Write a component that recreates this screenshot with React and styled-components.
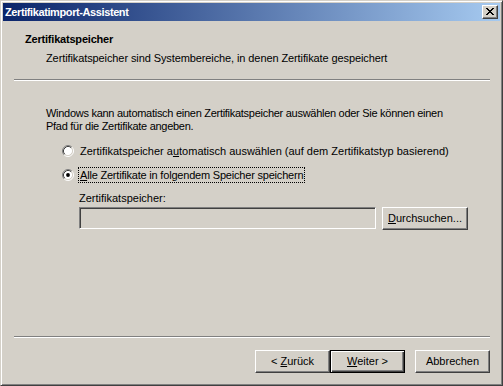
import React from "react";
import styled, { createGlobalStyle } from "styled-components";

const Global = createGlobalStyle`
  html, body { margin: 0; padding: 0; background: #d4d0c8; }
  body { font-family: "Liberation Sans", Arial, sans-serif; font-size: 11px; color: #000; }
  * { box-sizing: border-box; }
`;

const Window = styled.div`
  width: 503px;
  height: 386px;
  background: #d4d0c8;
  border: 1px solid;
  border-color: #d4d0c8 #404040 #404040 #d4d0c8;
  box-shadow: inset 1px 1px #ffffff, inset -1px -1px #808080;
  padding: 2px;
  display: flex;
  flex-direction: column;
`;

const TitleBar = styled.div`
  height: 18px;
  flex: none;
  display: flex;
  align-items: center;
  justify-content: space-between;
  padding: 0 2px 0 2px;
  background: linear-gradient(to right, #0a246a, #a6caf0);
`;

const TitleText = styled.span`
  color: #fff;
  font-weight: bold;
  font-size: 11px;
  line-height: 13px;
  letter-spacing: -0.4px;
  white-space: nowrap;
`;

const CloseButton = styled.div`
  width: 16px;
  height: 14px;
  background: #d4d0c8;
  border: 1px solid;
  border-color: #ffffff #404040 #404040 #ffffff;
  box-shadow: inset -1px -1px #808080;
  display: flex;
  align-items: center;
  justify-content: center;
  padding: 0 1px 1px 0;
`;

const Header = styled.div`
  height: 58px;
  flex: none;
  padding: 12px 0 0 22px;
  display: flex;
  flex-direction: column;
`;

const HeaderTitle = styled.div`
  font-weight: bold;
  line-height: 13px;
  letter-spacing: -0.2px;
`;

const HeaderSubtitle = styled.div`
  line-height: 13px;
  letter-spacing: -0.1px;
  margin: 6px 0 0 21px;
`;

const Separator = styled.div`
  height: 2px;
  flex: none;
  margin: 0 10px 0 11px;
  border-top: 1px solid #808080;
  border-bottom: 1px solid #ffffff;
`;

const Body = styled.div`
  flex: 1;
  padding: 26px 0 0 43px;
  display: flex;
  flex-direction: column;
`;

const Paragraph = styled.div`
  line-height: 13px;
  letter-spacing: -0.28px;
  white-space: nowrap;
`;

const RadioGroup = styled.div`
  margin: 10px 0 0 16px;
  display: flex;
  flex-direction: column;
  gap: 8px;
`;

const RadioRow = styled.div`
  height: 16px;
  display: flex;
  align-items: center;
  gap: 4px;
`;

const RadioLabel = styled.span`
  line-height: 12px;
  padding: 1px;
  letter-spacing: ${(p) => p.$ls || 0}px;
  border: 1px ${(p) => (p.$focus ? "dotted #000" : "solid transparent")};
  white-space: nowrap;
`;

const Mn = styled.u`
  text-decoration: underline;
  text-underline-offset: 1px;
`;

const StoreBlock = styled.div`
  margin: 9px 0 0 33px;
  display: flex;
  flex-direction: column;
  gap: 2px;
`;

const FieldLabel = styled.div`
  line-height: 13px;
`;

const FieldRow = styled.div`
  display: flex;
  align-items: flex-start;
  gap: 6px;
`;

const TextBox = styled.div`
  width: 297px;
  height: 22px;
  background: #d4d0c8;
  border: 1px solid;
  border-color: #808080 #ffffff #ffffff #808080;
  box-shadow: inset 1px 1px #404040, inset -1px -1px #d4d0c8;
`;

const Button = styled.button`
  width: ${(p) => p.$w || 75}px;
  height: 23px;
  padding: 0;
  margin: 0;
  font-family: "Liberation Sans", Arial, sans-serif;
  font-size: 11px;
  color: #000;
  background: #d4d0c8;
  border: 1px solid;
  border-color: ${(p) => (p.$default ? "#000" : "#ffffff #404040 #404040 #ffffff")};
  box-shadow: ${(p) =>
    p.$default
      ? "inset 1px 1px #ffffff, inset -1px -1px #404040, inset -2px -2px #808080"
      : "inset -1px -1px #808080"};
  display: flex;
  align-items: center;
  justify-content: center;
  line-height: 13px;
`;

const Footer = styled.div`
  flex: none;
  display: flex;
  justify-content: flex-end;
  padding: 12px 10px 10px 0;
`;

const ButtonPair = styled.div`
  display: flex;
  margin-right: 10px;
`;

function Radio({ checked }) {
  return (
    <svg width="12" height="12" viewBox="0 0 12 12" style={{ flex: "none" }}>
      <circle cx="6" cy="6" r="4.5" fill="#fff" />
      <path d="M2.11 9.89 A5.5 5.5 0 0 1 9.89 2.11" fill="none" stroke="#808080" />
      <path d="M2.82 9.18 A4.5 4.5 0 0 1 9.18 2.82" fill="none" stroke="#404040" />
      <path d="M9.89 2.11 A5.5 5.5 0 0 1 2.11 9.89" fill="none" stroke="#ffffff" />
      <path d="M9.18 2.82 A4.5 4.5 0 0 1 2.82 9.18" fill="none" stroke="#d4d0c8" />
      {checked && <circle cx="6" cy="6" r="1.9" fill="#000" />}
    </svg>
  );
}

function CloseGlyph() {
  return (
    <svg width="8" height="7" viewBox="0 0 8 7" shapeRendering="crispEdges">
      <path d="M0 0h2v1h-2zM6 0h2v1h-2zM1 1h2v1h-2zM5 1h2v1h-2zM2 2h4v1h-4zM3 3h2v1h-2zM2 4h4v1h-4zM1 5h2v1h-2zM5 5h2v1h-2zM0 6h2v1h-2zM6 6h2v1h-2z" fill="#000" />
    </svg>
  );
}

export default function App() {
  return (
    <>
      <Global />
      <Window>
        <TitleBar>
          <TitleText>Zertifikatimport-Assistent</TitleText>
          <CloseButton>
            <CloseGlyph />
          </CloseButton>
        </TitleBar>
        <Header>
          <HeaderTitle>Zertifikatspeicher</HeaderTitle>
          <HeaderSubtitle>Zertifikatspeicher sind Systembereiche, in denen Zertifikate gespeichert</HeaderSubtitle>
        </Header>
        <Separator />
        <Body>
          <Paragraph>
            Windows kann automatisch einen Zertifikatspeicher auswählen oder Sie können einen
            <br />
            Pfad für die Zertifikate angeben.
          </Paragraph>
          <RadioGroup>
            <RadioRow>
              <Radio />
              <RadioLabel>
                Zertifikatspeicher a<Mn>u</Mn>tomatisch auswählen (auf dem Zertifikatstyp basierend)
              </RadioLabel>
            </RadioRow>
            <RadioRow>
              <Radio checked />
              <RadioLabel $focus $ls={-0.2}>
                <Mn>A</Mn>lle Zertifikate in folgendem Speicher speichern
              </RadioLabel>
            </RadioRow>
          </RadioGroup>
          <StoreBlock>
            <FieldLabel>Zertifikatspeicher:</FieldLabel>
            <FieldRow>
              <TextBox />
              <Button $w={86}>
                <span>
                  <Mn>D</Mn>urchsuchen...
                </span>
              </Button>
            </FieldRow>
          </StoreBlock>
        </Body>
        <Separator />
        <Footer>
          <ButtonPair>
            <Button>
              <span>
                &lt; <Mn>Z</Mn>urück
              </span>
            </Button>
            <Button $default>
              <span>
                <Mn>W</Mn>eiter &gt;
              </span>
            </Button>
          </ButtonPair>
          <Button>Abbrechen</Button>
        </Footer>
      </Window>
    </>
  );
}
